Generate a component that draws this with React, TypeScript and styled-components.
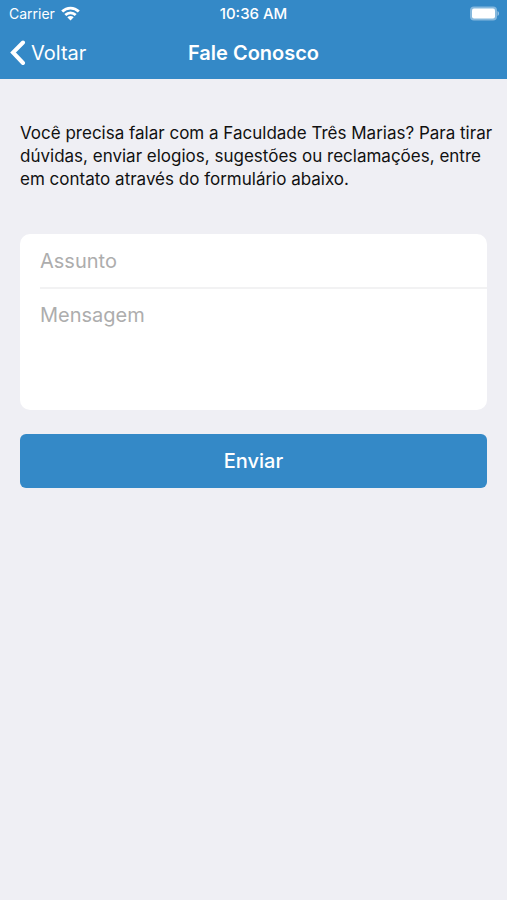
import React from 'react';
import styled, { createGlobalStyle } from 'styled-components';

const GlobalStyle = createGlobalStyle`
  * { box-sizing: border-box; }
  body {
    margin: 0;
    background: #efeff4;
    font-family: Inter, "Liberation Sans", sans-serif;
    color: #111;
  }
`;

const Screen = styled.div`
  min-height: 100vh;
  background: #efeff4;
`;

const TopArea = styled.header`
  background: #3489c7;
  color: #fff;
`;

const Bar = styled.div<{ $height: number }>`
  display: grid;
  grid-template-columns: 1fr auto 1fr;
  align-items: center;
  height: ${(p) => p.$height}px;
  padding: 0 8px;
`;

const Carrier = styled.div`
  display: flex;
  align-items: center;
  gap: 6px;
  padding-left: 1px;
  font-size: 14px;
`;

const Clock = styled.time`
  font-size: 15px;
  font-weight: 500;
`;

const BatteryIcon = styled.svg`
  justify-self: end;
`;

const BackLink = styled.a`
  display: flex;
  align-items: center;
  gap: 4px;
  padding-left: 1px;
  color: inherit;
  font-size: 20px;
  text-decoration: none;
`;

const Title = styled.h1`
  margin: 0;
  font-size: 20px;
  font-weight: 600;
`;

const Content = styled.main`
  padding: 43px 0 20px;
`;

const Intro = styled.p`
  margin: 0 0 43px;
  padding: 0 12px 0 20px;
  font-size: 17px;
  line-height: 23px;
`;

const Form = styled.form`
  display: flex;
  flex-direction: column;
  gap: 24px;
  padding: 0 20px;
`;

const Fields = styled.div`
  display: flex;
  flex-direction: column;
  padding-left: 20px;
  background: #fff;
  border-radius: 10px;
  overflow: hidden;
`;

const fieldStyle = `
  width: 100%;
  border: 0;
  outline: 0;
  padding: 0 20px 0 0;
  background: transparent;
  font-family: inherit;
  font-size: 20px;
  line-height: 26px;
  &::placeholder { color: #adadad; opacity: 1; }
`;

const SubjectInput = styled.input`
  ${fieldStyle}
  height: 55px;
  border-bottom: 2px solid #f2f2f3;
`;

const MessageInput = styled.textarea`
  ${fieldStyle}
  display: block;
  height: 121px;
  padding-top: 13px;
  resize: none;
`;

const SubmitButton = styled.button`
  height: 54px;
  border: 0;
  border-radius: 6px;
  background: #3489c7;
  color: #fff;
  font-family: inherit;
  font-size: 20px;
  font-weight: 500;
`;

export default function App() {
  return (
    <Screen>
      <GlobalStyle />
      <TopArea>
        <Bar $height={27}>
          <Carrier>
            <span>Carrier</span>
            <svg width="19" height="15" viewBox="0 0 19 15" fill="none" stroke="#fff" strokeWidth="2.8" aria-hidden="true">
              <path d="M1.200 5.600C5.900.9 13.100.9 17.800 5.600" />
              <path d="M4.300 9.100c3-2.900 7.400-2.900 10.400 0" />
              <path d="M9.500 14.500 6.300 11.300c1.800-1.600 4.600-1.600 6.400 0Z" fill="#fff" stroke="none" />
            </svg>
          </Carrier>
          <Clock>10:36 AM</Clock>
          <BatteryIcon width="29" height="15" viewBox="0 0 29 15" aria-hidden="true">
            <rect x="0" y="0.500" width="27" height="14" rx="4" fill="#fff" fillOpacity=".4" />
            <rect x="2" y="2.500" width="23" height="10" rx="2" fill="#fff" />
            <path d="M27.500 5c2 .8 2 4.200 0 5Z" fill="#fff" fillOpacity=".5" />
          </BatteryIcon>
        </Bar>
        <Bar $height={52}>
          <BackLink href="#voltar">
            <svg width="18" height="26" viewBox="0 0 18 26" fill="none" stroke="#fff" strokeWidth="4" strokeLinecap="round" aria-hidden="true">
              <path d="M14 2.500 4 12.500l10 10.500" />
            </svg>
            Voltar
          </BackLink>
          <Title>Fale Conosco</Title>
        </Bar>
      </TopArea>
      <Content>
        <Intro>
          Você precisa falar com a Faculdade Três Marias? Para tirar dúvidas, enviar elogios, sugestões ou reclamações, entre em contato através do formulário abaixo.
        </Intro>
        <Form onSubmit={(e: React.FormEvent) => e.preventDefault()}>
          <Fields>
            <SubjectInput aria-label="Assunto" placeholder="Assunto" />
            <MessageInput aria-label="Mensagem" placeholder="Mensagem" />
          </Fields>
          <SubmitButton type="submit">Enviar</SubmitButton>
        </Form>
      </Content>
    </Screen>
  );
}
